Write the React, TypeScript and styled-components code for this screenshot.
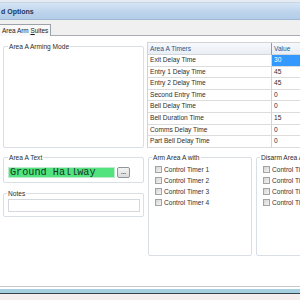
import React from "react";
import styled, { createGlobalStyle } from "styled-components";

const GlobalStyle = createGlobalStyle`
  html, body { margin: 0; padding: 0; background: #ffffff; }
  body { font-family: "Liberation Sans", Arial, sans-serif; }
  * { box-sizing: border-box; }
`;

const Window = styled.div`
  width: 300px;
  height: 300px;
  overflow: hidden;
  display: flex;
  flex-direction: column;
  background: #ffffff;
`;

const TopEdge = styled.div`
  height: 3px;
  background: #e6ebf1;
  border-bottom: 1px solid #c9d6e6;
`;

const TitleBar = styled.div`
  height: 17px;
  display: flex;
  align-items: center;
  padding-left: 1px;
  background: linear-gradient(#d6e5f5, #bcd3ec 60%, #b3cce8);
  border-bottom: 1px solid #9fb7d3;
  font-size: 7px;
  font-weight: bold;
  color: #1e3656;
  white-space: nowrap;
`;

const TabStrip = styled.div`
  height: 16px;
  display: flex;
  align-items: flex-end;
  background: #f0f0f0;
  border-bottom: 1px solid #a9adb3;
`;

const Tab = styled.div`
  height: 12px;
  padding: 0 2px 0 2px;
  margin-bottom: -1px;
  background: #f8f8f8;
  border: 1px solid #9da2a8;
  border-bottom: none;
  border-left: none;
  font-size: 6.4px;
  line-height: 11px;
  color: #1a1a1a;
  u { text-decoration: underline; }
`;

const Panel = styled.div`
  flex: 1;
  overflow: hidden;
  background: #ffffff;
  padding: 6px 0 0 3px;
  display: flex;
  flex-direction: column;
`;

const Row = styled.div<{ $h: number }>`
  height: ${(p) => p.$h}px;
  display: flex;
  gap: 3px;
`;

const LeftCol = styled.div`
  width: 141px;
  flex: none;
  display: flex;
  flex-direction: column;
`;

const RightCol = styled.div`
  flex: none;
  width: 160px;
  display: flex;
`;

const Group = styled.div<{ $top: number; $h: number; $w?: number; $left?: number }>`
  position: relative;
  margin-top: ${(p) => p.$top}px;
  margin-left: ${(p) => p.$left ?? 0}px;
  height: ${(p) => p.$h}px;
  width: ${(p) => (p.$w ? `${p.$w}px` : "auto")};
  flex: none;
  border: 1px solid #d9dfe4;
  border-radius: 2px;
`;

const GroupLabel = styled.span<{ $x: number }>`
  position: absolute;
  top: -4px;
  left: ${(p) => p.$x}px;
  padding: 0 1px;
  background: #ffffff;
  font-size: 6.6px;
  line-height: 7px;
  color: #2b2b2b;
  white-space: nowrap;
`;

const TextRow = styled.div`
  display: flex;
  align-items: center;
  gap: 2px;
  padding: 8px 0 0 4px;
`;

const LcdField = styled.div`
  width: 107px;
  height: 11px;
  background: #52e37f;
  border: 1px solid #bfe9cc;
  font-family: "Liberation Mono", "DejaVu Sans Mono", monospace;
  font-size: 10.2px;
  line-height: 10px;
  padding-left: 1px;
  color: #17351f;
  white-space: nowrap;
  overflow: hidden;
`;

const DotsButton = styled.div`
  width: 13px;
  height: 11px;
  margin-top: 1px;
  border: 1px solid #8f949a;
  border-radius: 2px;
  background: linear-gradient(#f4f4f4, #dadada);
  display: flex;
  align-items: center;
  justify-content: center;
  font-size: 6px;
  line-height: 6px;
  font-weight: bold;
  color: #333;
  padding-bottom: 2px;
`;

const NotesBox = styled.div`
  margin: 5px 0 0 4px;
  width: 132px;
  height: 13px;
  border: 1px solid #d5d9de;
  background: #ffffff;
`;

const Table = styled.div`
  width: 160px;
  height: 106px;
  border: 1px solid #d3d3d3;
  display: grid;
  grid-template-columns: 123px 1fr;
  grid-template-rows: 12px repeat(8, 11.6px);
  align-content: start;
`;

const HeadCell = styled.div<{ $divider?: boolean }>`
  background: linear-gradient(#f7f9fc, #e9eef5);
  border-bottom: 1px solid #d3d7dc;
  border-left: ${(p) => (p.$divider ? "1px solid #9a9a9a" : "none")};
  font-size: 6.6px;
  line-height: 11px;
  padding-left: 2px;
  color: #2a5590;
  white-space: nowrap;
`;

const Cell = styled.div<{ $divider?: boolean; $selected?: boolean }>`
  border-bottom: 1px solid #dcdcdc;
  border-left: ${(p) => (p.$divider ? "1px solid #d3d3d3" : "none")};
  background: ${(p) => (p.$selected ? "#3399ff" : "#ffffff")};
  color: ${(p) => (p.$selected ? "#ffffff" : "#2e2e2e")};
  font-size: 6.6px;
  line-height: 10.6px;
  padding-left: 2px;
  white-space: nowrap;
  overflow: hidden;
`;

const CheckList = styled.div`
  display: flex;
  flex-direction: column;
  gap: 3.7px;
  padding: 8px 0 0 6px;
`;

const CheckRow = styled.div`
  display: flex;
  align-items: center;
  gap: 2px;
  height: 7.3px;
  font-size: 6.6px;
  color: #333;
  white-space: nowrap;
`;

const Box = styled.span`
  width: 7px;
  height: 7px;
  flex: none;
  border: 1px solid #a3a3a3;
  background: linear-gradient(135deg, #d4d4d4, #f5f5f5);
`;

const Footer = styled.div`
  height: 14px;
  flex: none;
  display: flex;
  flex-direction: column;
  background: #f4eeef;
`;

const FooterLine = styled.div<{ $h: number; $c: string }>`
  height: ${(p) => p.$h}px;
  background: ${(p) => p.$c};
  flex: none;
`;

const timers: [string, string][] = [
  ["Exit Delay Time", "30"],
  ["Entry 1 Delay Time", "45"],
  ["Entry 2 Delay Time", "45"],
  ["Second Entry Time", "0"],
  ["Bell Delay Time", "0"],
  ["Bell Duration Time", "15"],
  ["Comms Delay Time", "0"],
  ["Part Bell Delay Time", "0"],
];

const timersList = ["Control Timer 1", "Control Timer 2", "Control Timer 3", "Control Timer 4"];

export default function App() {
  return (
    <Window>
      <GlobalStyle />
      <TopEdge />
      <TitleBar>d Options</TitleBar>
      <TabStrip>
        <Tab>
          Area Arm <u>S</u>uites
        </Tab>
      </TabStrip>
      <Panel>
        <Row $h={106}>
          <LeftCol>
            <Group $top={4} $h={102}>
              <GroupLabel $x={4}>Area A Arming Mode</GroupLabel>
            </Group>
          </LeftCol>
          <RightCol>
            <Table>
              <HeadCell>Area A Timers</HeadCell>
              <HeadCell $divider>Value</HeadCell>
              {timers.map(([name, value], i) => (
                <React.Fragment key={name}>
                  <Cell>{name}</Cell>
                  <Cell $divider $selected={i === 0}>
                    {value}
                  </Cell>
                </React.Fragment>
              ))}
            </Table>
          </RightCol>
        </Row>
        <Row $h={110}>
          <LeftCol>
            <Group $top={9} $h={26}>
              <GroupLabel $x={4}>Area A Text</GroupLabel>
              <TextRow>
                <LcdField>Ground Hallway</LcdField>
                <DotsButton>...</DotsButton>
              </TextRow>
            </Group>
            <Group $top={10} $h={24}>
              <GroupLabel $x={3}>Notes</GroupLabel>
              <NotesBox />
            </Group>
          </LeftCol>
          <RightCol>
            <Group $top={9} $h={99} $w={104} $left={1}>
              <GroupLabel $x={3}>Arm Area A with</GroupLabel>
              <CheckList>
                {timersList.map((t) => (
                  <CheckRow key={t}>
                    <Box />
                    {t}
                  </CheckRow>
                ))}
              </CheckList>
            </Group>
            <Group $top={9} $h={99} $w={100} $left={4}>
              <GroupLabel $x={3}>Disarm Area A with</GroupLabel>
              <CheckList>
                {timersList.map((t) => (
                  <CheckRow key={t}>
                    <Box />
                    {t}
                  </CheckRow>
                ))}
              </CheckList>
            </Group>
          </RightCol>
        </Row>
      </Panel>
      <Footer>
        <FooterLine $h={1} $c="#c8c8c8" />
        <FooterLine $h={2} $c="#ffffff" />
        <FooterLine $h={4} $c="#a6cfdf" />
        <FooterLine $h={1} $c="#34444e" />
      </Footer>
    </Window>
  );
}
